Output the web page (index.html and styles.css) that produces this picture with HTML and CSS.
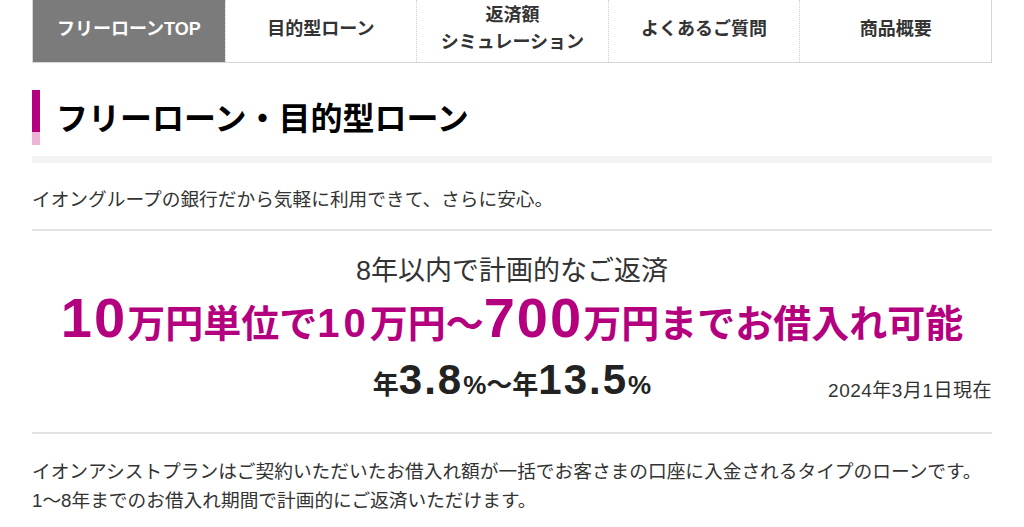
FILE: index.html
```html
<!DOCTYPE html>
<html lang="ja">
	<head>
		<meta charset="utf-8">
		<title>フリーローン・目的型ローン</title>
		<link rel="stylesheet" href="styles.css">
	</head>
	<body>
		<div class="corpo">

			<ul class="abas">
				<li class="ativa">フリーローンTOP</li>
				<li>目的型ローン</li>
				<li>返済額<br>シミュレーション</li>
				<li>よくあるご質問</li>
				<li>商品概要</li>
			</ul>

			<div class="titulo-box">
				<h1 class="titulo">フリーローン・目的型ローン</h1>
			</div>

			<p class="lead">イオングループの銀行だから気軽に利用できて、さらに安心。</p>

			<div class="destaque">
				<p class="sub">8年以内で計画的なご返済</p>
				<p class="principal"><span class="grande">10</span>万円単位で<span class="medio">10</span>万円～<span class="grande">700</span>万円までお借入れ可能</p>
				<div class="linha-taxa">
					<p class="taxa">年<span class="num">3.8</span>%～年<span class="num">13.5</span>%</p>
					<p class="data">2024年3月1日現在</p>
				</div>
			</div>

			<p class="texto">イオンアシストプランはご契約いただいたお借入れ額が一括でお客さまの口座に入金されるタイプのローンです。<br>1～8年までのお借入れ期間で計画的にご返済いただけます。</p>
		</div>
	</body>
</html>
```

FILE: styles.css
```css
body {
    margin: 0;
    font-family: "Liberation Sans", "Noto Sans CJK JP", sans-serif;
    color: #333;
    background: #fff;
}
p {
    margin: 0;
}
.corpo {
    width: 960px;
    margin: 0 auto;
}
.abas {
    display: grid;
    grid-template-columns: repeat(5, 1fr);
    margin: 0 0 27px;
    padding: 0;
    list-style: none;
    border: 1px solid #d6d6d6;
    border-top: none;
}
.abas li {
    display: flex;
    align-items: center;
    justify-content: center;
    height: 58px;
    padding-bottom: 4px;
    border-left: 1px dotted #cfcfcf;
    text-align: center;
    font-size: 18px;
    font-weight: bold;
    line-height: 27px;
    color: #333;
}
.abas li:first-child {
    border-left: none;
}
.abas li.ativa {
    background: #7b7b7b;
    color: #fff;
}
.titulo-box {
    padding-bottom: 11px;
    border-bottom: 7px solid #f3f3f3;
}
.titulo {
    margin: 0;
    height: 55px;
    padding-left: 16px;
    border-left: 8px solid #b4007f;
    border-image: linear-gradient(#b4007f 76%, #efb3d8 76%) 1;
    font-size: 32px;
    line-height: 59px;
    font-weight: bold;
    color: #000;
}
.lead {
    margin-top: 23px;
    padding-bottom: 15px;
    border-bottom: 2px solid #e2e2e2;
    font-size: 18.7px;
    line-height: 28px;
}
.destaque {
    padding: 21px 0 24px;
    border-bottom: 2px solid #e2e2e2;
    text-align: center;
}
.sub {
    font-size: 27px;
    line-height: 38px;
    color: #333;
}
.principal {
    font-size: 38px;
    line-height: 54px;
    font-weight: bold;
    color: #b4007f;
    white-space: nowrap;
}
.principal .grande {
    font-size: 56px;
    line-height: 1;
    letter-spacing: 2px;
}
.principal .medio {
    font-size: 40px;
    letter-spacing: 4px;
}
.linha-taxa {
    display: grid;
    grid-template-columns: 1fr auto 1fr;
    align-items: end;
    margin-top: 8px;
}
.taxa {
    grid-column: 2;
    font-size: 26px;
    line-height: 46px;
    font-weight: bold;
    color: #222;
}
.taxa .num {
    font-size: 42px;
    line-height: 1;
    letter-spacing: 2px;
}
.data {
    grid-column: 3;
    justify-self: end;
    font-size: 19px;
    line-height: 26px;
    letter-spacing: 0.5px;
    padding-bottom: 4px;
    color: #333;
}
.texto {
    margin-top: 23px;
    font-size: 18.7px;
    line-height: 29px;
}
```
